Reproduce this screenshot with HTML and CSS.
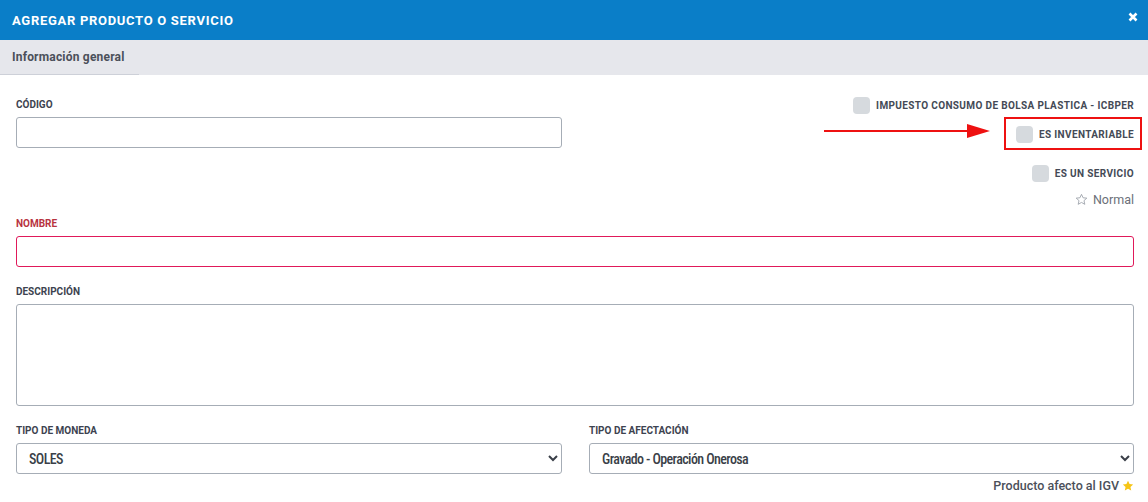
FILE: index.html
```html
<!DOCTYPE html>
<html lang="es">
<head>
    <meta charset="UTF-8">
    <title>Agregar producto o servicio</title>
    <link rel="stylesheet" href="styles.css">
</head>
<body>
    <div class="modal">
        <div class="modal-header">
            <h1>AGREGAR PRODUCTO O SERVICIO</h1>
            <span class="close">
                <svg width="10" height="10" viewBox="0 0 10 10"><path d="M1.5 1.5 L8.5 8.5 M8.5 1.5 L1.5 8.5" stroke="#fff" stroke-width="2.6"/></svg>
            </span>
        </div>

        <div class="tabs">
            <div class="tab active">Información general</div>
        </div>

        <div class="modal-body">
            <div class="row top-row">
                <div class="field">
                    <label>CÓDIGO</label>
                    <input type="text" class="input">
                </div>
                <div class="options">
                    <div class="check first"><span class="box"></span>IMPUESTO CONSUMO DE BOLSA PLASTICA - ICBPER</div>
                    <div class="check highlighted"><span class="box"></span>ES INVENTARIABLE</div>
                    <div class="check service"><span class="box"></span>ES UN SERVICIO</div>
                    <div class="type">
                        <svg width="13" height="13" viewBox="0 0 24 24"><path d="M12 2.5l2.9 6.3 6.9.7-5.2 4.6 1.5 6.8L12 17.4l-6.1 3.5 1.5-6.8-5.2-4.6 6.9-.7z" fill="none" stroke="#9aa0a8" stroke-width="1.6" stroke-linejoin="round"/></svg>
                        Normal
                    </div>
                    <!-- annotation -->
                    <svg class="arrow" width="166" height="16" viewBox="0 0 166 16"><line x1="0" y1="8" x2="146" y2="8" stroke="#ee1111" stroke-width="2"/><path d="M143 1 L166 8 L143 15 Z" fill="#ee1111"/></svg>
                </div>
            </div>

            <div class="field">
                <label class="required">NOMBRE</label>
                <input type="text" class="input invalid">
            </div>

            <div class="field">
                <label>DESCRIPCIÓN</label>
                <textarea class="input textarea"></textarea>
            </div>

            <div class="row">
                <div class="field last">
                    <label>TIPO DE MONEDA</label>
                    <select class="input select"><option>SOLES</option></select>
                </div>
                <div class="field last">
                    <label>TIPO DE AFECTACIÓN</label>
                    <select class="input select"><option>Gravado - Operación Onerosa</option></select>
                    <div class="note">Producto afecto al IGV
                        <svg width="12" height="12" viewBox="0 0 24 24"><path d="M12 1.5l3.1 6.6 7.2.8-5.4 4.9 1.5 7.1L12 17.3l-6.4 3.6 1.5-7.1L1.7 8.9l7.2-.8z" fill="#f6c516"/></svg>
                    </div>
                </div>
            </div>
        </div>
    </div>
</body>
</html>
```

FILE: styles.css
```css
body {
    margin: 0;
    font-family: Roboto, "Liberation Sans", sans-serif;
    background: #fff;
    color: #3d4350;
}
.modal {
    width: 1148px;
}
.modal-header {
    height: 40px;
    background: #0a7ec8;
    display: flex;
    align-items: center;
    justify-content: space-between;
    padding: 0 10px 0 12px;
    box-sizing: border-box;
}
.modal-header h1 {
    margin: 0;
    font-size: 13px;
    font-weight: 700;
    color: #fff;
    letter-spacing: 0.7px;
}
.close {
    display: flex;
    margin-top: -6px;
}
.tabs {
    height: 35px;
    background: #e6e7ec;
    display: flex;
}
.tab {
    width: 139px;
    box-sizing: border-box;
    padding: 0 12px;
    font-size: 12px;
    font-weight: 700;
    letter-spacing: 0.2px;
    color: #4b505a;
    line-height: 34px;
    border-bottom: 1px solid #cdd0d8;
}
.modal-body {
    padding: 23px 14px 0 16px;
}
.row {
    display: grid;
    grid-template-columns: 546px 545px;
    column-gap: 27px;
}
.field {
    margin-bottom: 18px;
}
.field.last {
    margin-bottom: 0;
}
.field label {
    display: block;
    font-size: 10px;
    font-weight: 700;
    line-height: 14px;
    color: #3d4350;
    margin-bottom: 5px;
}
.field label.required {
    color: #b8333f;
}
.input {
    display: block;
    width: 100%;
    height: 31px;
    box-sizing: border-box;
    border: 1px solid #a6adb6;
    border-radius: 3px;
    background: #fff;
    font-family: inherit;
    font-size: 14px;
    color: #3a3f48;
    padding: 0 9px;
}
.input.invalid {
    border-color: #e0195a;
}
.textarea {
    height: 102px;
    resize: none;
}
.select {
    font-weight: 500;
    font-stretch: 80%;
    letter-spacing: -0.6px;
    padding: 0 8px;
}
.note {
    font-size: 12.5px;
    font-weight: 500;
    color: #4b505a;
    margin-top: 4px;
    display: flex;
    justify-content: flex-end;
    align-items: center;
    gap: 3px;
}
.top-row .field {
    margin-bottom: 0;
}
.top-row {
    margin-bottom: 7px;
    height: 112px;
}
.options {
    position: relative;
    display: flex;
    flex-direction: column;
    align-items: flex-end;
}
.check {
    display: flex;
    align-items: center;
    font-size: 10px;
    font-weight: 700;
    color: #444a56;
    letter-spacing: 0.36px;
}
.check .box {
    width: 17px;
    height: 17px;
    border-radius: 4px;
    background: #d6dade;
    margin-right: 6px;
}
.check.first {
    margin-top: -1px;
}
.check.highlighted {
    margin-top: 12px;
    position: relative;
}
.check.highlighted::after {
    content: "";
    position: absolute;
    left: -12px;
    right: -8px;
    top: -9px;
    bottom: -7px;
    border: 2px solid #ee1111;
}
.check.service {
    margin-top: 22px;
}
.type {
    margin-top: 10px;
    display: flex;
    align-items: center;
    gap: 5px;
    font-size: 12.5px;
    color: #6b7079;
}
.arrow {
    position: absolute;
    left: 235px;
    top: 25px;
}
```
